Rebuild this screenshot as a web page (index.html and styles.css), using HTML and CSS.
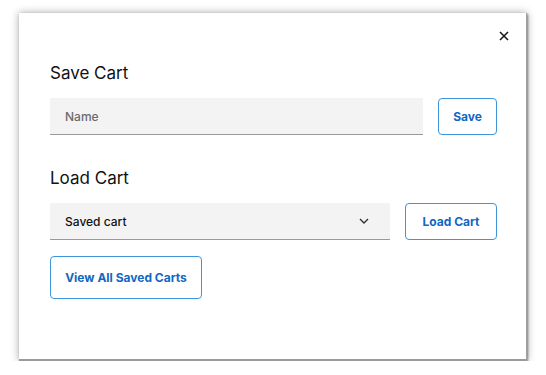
FILE: index.html
```html
<!DOCTYPE html>
<html lang="en">
<head>
  <meta charset="UTF-8">
  <meta name="viewport" content="width=device-width, initial-scale=1.0">
  <title>Saved Carts</title>
  <link rel="stylesheet" href="styles.css">
</head>
<body>
  <div class="modal">
    <button class="close-btn" aria-label="Close">
      <svg width="10" height="10" viewBox="0 0 10 10"><path d="M1 1L9 9M9 1L1 9" stroke="#1a1a1a" stroke-width="1.6" fill="none"/></svg>
    </button>

    <h2 class="section-title first">Save Cart</h2>
    <div class="field-row">
      <input class="text-field" type="text" placeholder="Name">
      <button class="outline-btn save">Save</button>
    </div>

    <h2 class="section-title">Load Cart</h2>
    <div class="field-row">
      <div class="select-field">
        <span>Saved cart</span>
        <svg width="10" height="6" viewBox="0 0 10 6"><path d="M1 1L5 5L9 1" stroke="#333" stroke-width="1.4" fill="none"/></svg>
      </div>
      <button class="outline-btn load">Load Cart</button>
    </div>

    <button class="outline-btn tall">View All Saved Carts</button>
  </div>
</body>
</html>
```

FILE: styles.css
```css
body {
  margin: 0;
  background: #fff;
  font-family: Inter, "Noto Sans", sans-serif;
  color: #111;
}
.modal {
  position: relative;
  box-sizing: border-box;
  width: 508px;
  height: 348px;
  margin: 13px 0 0 19px;
  padding: 48px 29px 0 31px;
  background: #fff;
  border-right: 1px solid #a0a0a0;
  border-bottom: 2px solid #9a9a9a;
  box-shadow: 1px 1px 2px rgba(0, 0, 0, 0.4), 0 0 8px rgba(0, 0, 0, 0.35);
}
.close-btn {
  position: absolute;
  top: 17px;
  right: 16px;
  width: 12px;
  height: 12px;
  padding: 0;
  border: none;
  background: none;
  display: flex;
  align-items: center;
  justify-content: center;
  cursor: pointer;
}
.section-title {
  margin: 31px 0 13px;
  font-size: 17px;
  line-height: 24px;
  font-weight: 400;
  color: #111;
}
.section-title.first {
  margin-top: 0;
}
.field-row {
  display: flex;
  gap: 15px;
  align-items: flex-start;
}
.text-field {
  flex: 1;
  min-width: 0;
  box-sizing: border-box;
  height: 37px;
  padding: 0 15px;
  border: none;
  border-bottom: 1px solid #9a9a9a;
  background: #f3f3f3;
  font-family: inherit;
  font-size: 12px;
  font-weight: 500;
  outline: none;
}
.text-field::placeholder {
  color: #6b6b6b;
}
.select-field {
  flex: 1;
  box-sizing: border-box;
  height: 37px;
  padding: 0 21px 0 15px;
  border-bottom: 1px solid #9a9a9a;
  background: #f3f3f3;
  display: flex;
  align-items: center;
  justify-content: space-between;
  font-size: 12px;
  font-weight: 500;
  color: #111;
}
.outline-btn {
  flex-shrink: 0;
  box-sizing: border-box;
  height: 37px;
  padding: 0;
  border: 1px solid #3d95dc;
  border-radius: 4px;
  background: #fff;
  color: #1167c2;
  font-family: inherit;
  font-size: 12px;
  font-weight: 700;
  cursor: pointer;
}
.outline-btn.save {
  width: 59px;
}
.outline-btn.load {
  width: 92px;
}
.outline-btn.tall {
  width: 152px;
  height: 43px;
  margin-top: 16px;
}
```
